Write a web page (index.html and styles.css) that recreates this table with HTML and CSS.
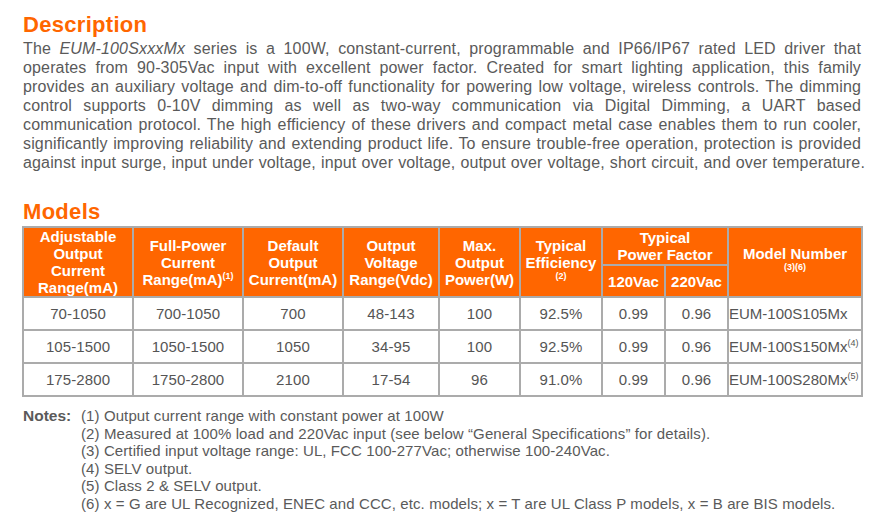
FILE: index.html
```html
<!DOCTYPE html>
<html>
<head>
<meta charset="utf-8">
<link rel="stylesheet" href="styles.css">
</head>
<body>
<div class="page">
  <h1 class="heading heading-desc">Description</h1>
  <p class="desc">
    <span class="ln">The <em>EUM-100SxxxMx</em> series is a 100W, constant-current, programmable and IP66/IP67 rated LED driver that</span>
    <span class="ln">operates from 90-305Vac input with excellent power factor. Created for smart lighting application, this family</span>
    <span class="ln">provides an auxiliary voltage and dim-to-off functionality for powering low voltage, wireless controls. The dimming</span>
    <span class="ln">control supports 0-10V dimming as well as two-way communication via Digital Dimming, a UART based</span>
    <span class="ln">communication protocol. The high efficiency of these drivers and compact metal case enables them to run cooler,</span>
    <span class="ln">significantly improving reliability and extending product life. To ensure trouble-free operation, protection is provided</span>
    <span class="ln last">against input surge, input under voltage, input over voltage, output over voltage, short circuit, and over temperature.</span>
  </p>

  <h1 class="heading heading-models">Models</h1>
  <table class="models">
    <colgroup>
      <col style="width:110px"><col style="width:110px"><col style="width:100px"><col style="width:96px"><col style="width:81px"><col style="width:82px"><col style="width:63px"><col style="width:63px"><col style="width:134px">
    </colgroup>
    <thead>
      <tr class="h1row">
        <th rowspan="2">Adjustable<br>Output<br>Current<br>Range(mA)</th>
        <th rowspan="2">Full-Power<br>Current<br>Range(mA)<sup>(1)</sup></th>
        <th rowspan="2">Default<br>Output<br>Current(mA)</th>
        <th rowspan="2">Output<br>Voltage<br>Range(Vdc)</th>
        <th rowspan="2">Max.<br>Output<br>Power(W)</th>
        <th rowspan="2">Typical<br>Efficiency<br><span class="note">(2)</span></th>
        <th colspan="2">Typical<br>Power Factor</th>
        <th rowspan="2">Model Number<br><span class="note">(3)(6)</span></th>
      </tr>
      <tr class="h2row">
        <th>120Vac</th>
        <th>220Vac</th>
      </tr>
    </thead>
    <tbody>
      <tr class="r1">
        <td>70-1050</td><td>700-1050</td><td>700</td><td>48-143</td><td>100</td><td>92.5%</td><td>0.99</td><td>0.96</td><td class="model">EUM-100S105Mx</td>
      </tr>
      <tr class="r2">
        <td>105-1500</td><td>1050-1500</td><td>1050</td><td>34-95</td><td>100</td><td>92.5%</td><td>0.99</td><td>0.96</td><td class="model">EUM-100S150Mx<sup>(4)</sup></td>
      </tr>
      <tr class="r3">
        <td>175-2800</td><td>1750-2800</td><td>2100</td><td>17-54</td><td>96</td><td>91.0%</td><td>0.99</td><td>0.96</td><td class="model">EUM-100S280Mx<sup>(5)</sup></td>
      </tr>
    </tbody>
  </table>

  <div class="notes">
    <div class="notes-label">Notes:</div>
    <div class="notes-list">
      <div>(1) Output current range with constant power at 100W</div>
      <div>(2) Measured at 100% load and 220Vac input (see below “General Specifications” for details).</div>
      <div>(3) Certified input voltage range: UL, FCC 100-277Vac; otherwise 100-240Vac.</div>
      <div>(4) SELV output.</div>
      <div>(5) Class 2 &amp; SELV output.</div>
      <div>(6) x = G are UL Recognized, ENEC and CCC, etc. models; x = T are UL Class P models, x = B are BIS models.</div>
    </div>
  </div>
</div>
</body>
</html>
```

FILE: styles.css
```css
html, body {
  margin: 0;
  padding: 0;
  background: #ffffff;
}
body {
  font-family: "Liberation Sans", Arial, sans-serif;
  color: #5a5a5a;
}
.page {
  padding-left: 23px;
  width: 845px;
}
.heading {
  font-family: "Liberation Sans", Arial, sans-serif;
  font-weight: bold;
  font-size: 22px;
  line-height: 24px;
  color: #ff6600;
  letter-spacing: 0.3px;
  margin: 0;
}
.heading-desc {
  margin-top: 13px;
  margin-bottom: 2px;
}
.heading-models {
  margin-top: 28px;
  margin-bottom: 2px;
}
.desc {
  margin: 0;
  width: 838px;
  font-size: 16px;
  line-height: 19px;
  letter-spacing: 0.15px;
}
.desc .ln {
  display: block;
  text-align: justify;
  text-align-last: justify;
  white-space: nowrap;
}
.desc .ln.last {
  width: 842px;
}
.desc em {
  font-style: italic;
}
.models {
  margin-left: -1px;
  width: 839px;
  table-layout: fixed;
  border-collapse: collapse;
  border: 2px solid #a6a6a6;
}
.models th, .models td {
  border: 2px solid #ababab;
  padding: 0;
  text-align: center;
  vertical-align: middle;
}
.models th {
  background: #ff6600;
  color: #ffffff;
  font-weight: bold;
  font-size: 15px;
  line-height: 17px;
  white-space: nowrap;
}
.models .h1row th { height: 36px; }
.models .h2row th { height: 30px; }
.models sup {
  font-size: 9px;
  line-height: 0;
  vertical-align: 6px;
}
.models .note {
  font-size: 9px;
  line-height: 10px;
  display: inline-block;
  vertical-align: top;
}
.models td {
  font-size: 15px;
  color: #555555;
  height: 31px;
  letter-spacing: 0.1px;
}
.models td.model {
  text-align: left;
  white-space: nowrap;
  letter-spacing: 0;
}
.models td.model sup {
  font-size: 9px;
}
.notes {
  display: flex;
  margin-top: 10px;
  font-size: 15px;
  line-height: 17.5px;
}
.notes-label {
  width: 58px;
  flex: none;
  font-weight: bold;
  font-size: 15.5px;
}
.notes-list {
  flex: 1;
  letter-spacing: 0.1px;
}
```
